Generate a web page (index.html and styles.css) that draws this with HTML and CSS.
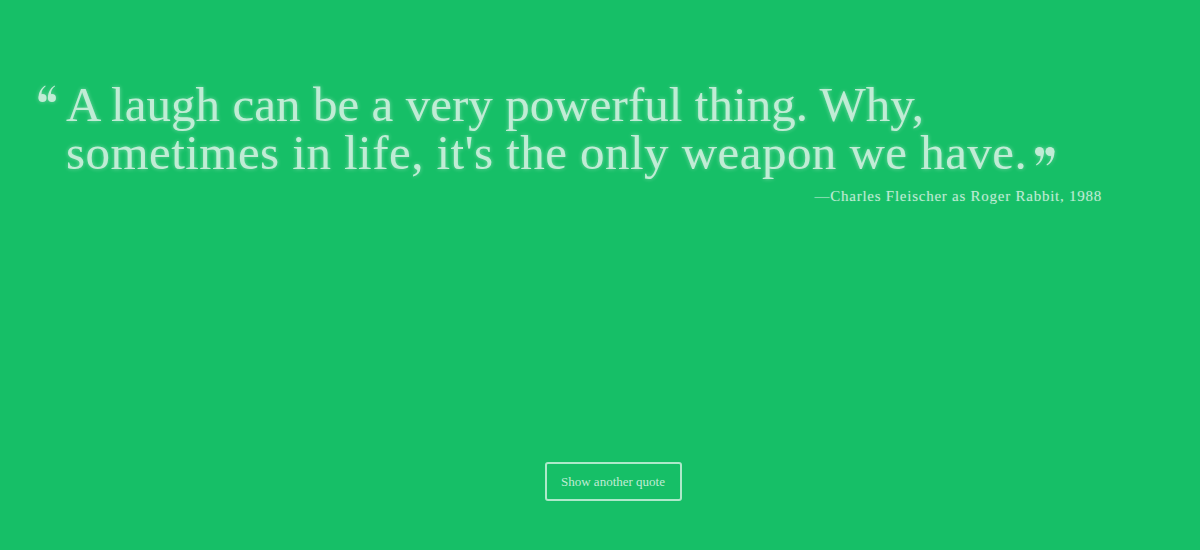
FILE: index.html
```html
<!DOCTYPE html>
<html>
<head>
<meta charset="utf-8">
<link rel="stylesheet" href="styles.css">
</head>
<body>
<main class="page">
  <section class="quote-box">
    <div class="quote">
      <svg class="qmark open" viewBox="0 0 20 19" aria-hidden="true"><g transform="rotate(180 10 9.5)"><circle cx="4.5" cy="4.5" r="4.5"/><path d="M8.6 3.2C9.6 9 7 15.5 1.5 18.5L1 17.6C4.5 15 6 11.5 5.5 8.8z"/><circle cx="15" cy="4.5" r="4.5"/><path d="M19.1 3.2C20.1 9 17.5 15.5 12 18.5L11.5 17.6C15 15 16.5 11.5 16 8.8z"/></g></svg>
      <p class="text"><span class="line">A laugh can be a very powerful thing. Why,</span> <span class="line wide">sometimes in life, it's the only weapon we have.<svg class="qmark close" viewBox="0 0 20 19" width="20" height="19" aria-hidden="true"><circle cx="4.5" cy="4.5" r="4.5"/><path d="M8.6 3.2C9.6 9 7 15.5 1.5 18.5L1 17.6C4.5 15 6 11.5 5.5 8.8z"/><circle cx="15" cy="4.5" r="4.5"/><path d="M19.1 3.2C20.1 9 17.5 15.5 12 18.5L11.5 17.6C15 15 16.5 11.5 16 8.8z"/></svg></span></p>
    </div>
    <p class="author">—Charles Fleischer as Roger Rabbit, 1988</p>
  </section>
  <div class="actions">
    <button class="btn">Show another quote</button>
  </div>
</main>
</body>
</html>
```

FILE: styles.css
```css
html, body {
  margin: 0;
  height: 100%;
}
body {
  background: #16bf67;
  font-family: "Liberation Serif", "Times New Roman", serif;
  color: #c0ecd5;
}
.page {
  height: 550px;
  box-sizing: border-box;
  padding: 81px 98px 0 36px;
  display: flex;
  flex-direction: column;
}
.quote {
  display: flex;
  align-items: flex-start;
}
.qmark {
  fill: #c0ecd5;
  filter: drop-shadow(0 0 2px rgba(255,255,255,0.35));
}
.qmark.open {
  flex: none;
  width: 22px;
  height: 17px;
  margin: 4px 8px 0 0;
}
.qmark.close {
  margin-left: 8px;
  vertical-align: 3px;
}
.text {
  margin: 0;
  font-size: 49px;
  line-height: 48px;
  max-width: 1000px;
  text-shadow: 0 0 4px rgba(255,255,255,0.4);
}
.line {
  display: block;
  white-space: nowrap;
  letter-spacing: 0.05px;
}
.line.wide {
  letter-spacing: 0.45px;
}
.author {
  margin: 11px 0 0;
  text-align: right;
  font-size: 15px;
  letter-spacing: 0.75px;
  text-shadow: 0 0 2px rgba(255,255,255,0.2);
}
.actions {
  margin-top: auto;
  margin-bottom: 49px;
  display: flex;
  justify-content: center;
  padding-left: 88px;
}
.btn {
  font-family: "Liberation Serif", "Times New Roman", serif;
  font-size: 13px;
  color: #c0ecd5;
  background: transparent;
  border: 2px solid rgba(255,255,255,0.65);
  border-radius: 3px;
  width: 137px;
  height: 39px;
  padding: 0;
}
```
